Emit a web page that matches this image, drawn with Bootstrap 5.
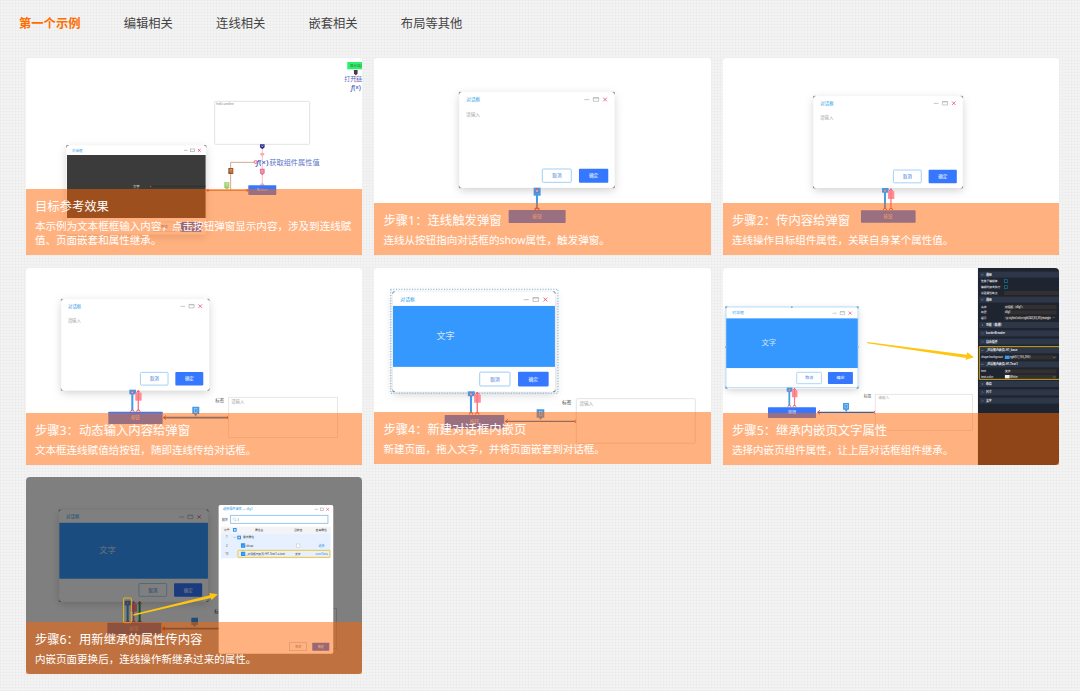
<!DOCTYPE html>
<html lang="zh-CN">
<head>
<meta charset="utf-8">
<meta name="viewport" content="width=device-width, initial-scale=1">
<title>第一个示例</title>
<link rel="stylesheet" href="https://cdn.jsdelivr.net/npm/bootstrap@5.3.0/dist/css/bootstrap.min.css">
<style>
  body {
    font-family: "Noto Sans", "Noto Sans CJK SC", sans-serif;
    background-color: #f3f3f3;
    background-image:
      linear-gradient(90deg, rgba(0,0,0,.014) 1px, transparent 1px),
      linear-gradient(rgba(0,0,0,.014) 1px, transparent 1px);
    background-size: 3px 3px;
    height: 691px;
    overflow: hidden;
  }
  .topic-nav { padding: 14px 0 0 19px; height: 58px; gap: 43.2px; }
  .topic-nav .nav-link { font-size: 12.3px; line-height: 20px; color: #444; padding: 0; }
  .topic-nav .nav-link.active { color: #ff6d00; font-weight: 700; }
  .steps { width: 1033.4px; margin-left: 25.7px; }
  .steps > .row { --bs-gutter-x: 12.3px; --bs-gutter-y: 12.6px; }
  .step { height: 197px; }
  .shot { width: 100%; height: 100%; border-radius: 4px; background: #fff; }
  .caption-bar { background: rgba(255,102,0,.5); color: #fff; padding: 8px 8px 7.6px 9.2px; }
  .caption-bar h2 { font-size: 12.35px; line-height: 20px; font-weight: 400; margin: 0 0 2px; }
  .caption-bar p { font-size: 10.56px; line-height: 14.4px; margin: 0; }
  svg text { font-family: "Noto Sans", "Noto Sans CJK SC", sans-serif; }
</style>
</head>
<body>
<svg width="0" height="0" class="position-absolute">
  <defs>
    <filter id="shade" x="-20%" y="-20%" width="140%" height="150%"><feDropShadow dx="0" dy="8" stdDeviation="13" flood-color="#000" flood-opacity=".18"/></filter>
    <g id="frame">
      <path d="M0 6V0H6M459 0H465V6M0 280V286H6M459 286H465V280" fill="none" stroke="#777" stroke-width="2.5"/>
      <rect width="465" height="286" rx="8" fill="#fff" filter="url(#shade)"/>
      <text x="21" y="26" font-size="14" fill="#2b9be8">对话框</text>
      <path d="M375 22H390" stroke="#bbb" stroke-width="2.5"/>
      <path d="M402 16H418V27H402ZM402 17.5H418" fill="none" stroke="#aaa" stroke-width="2"/>
      <path d="M432 16L443 27M443 16L432 27" stroke="#e8506e" stroke-width="2.5"/>
      <rect x="249" y="230" width="87" height="40" rx="3" fill="#fff" stroke="#8cc8f2" stroke-width="2.5"/>
      <text x="293" y="255" font-size="14" text-anchor="middle" fill="#3a78d8">取消</text>
      <rect x="359" y="229" width="88" height="42" rx="3" fill="#3578ff"/>
      <text x="403" y="255" font-size="14" text-anchor="middle" fill="#fff">确定</text>
    </g>
    <g id="dialog"><use href="#frame"/><text x="20" y="70" font-size="14" fill="#aaa">请输入</text></g>
    <g id="dialogBlue"><use href="#frame"/><rect y="40" width="465" height="175" fill="#3498ff"/>
      <text x="125" y="135" font-size="26" fill="#d6e4f2">文字</text></g>
    <g id="wires">
      <rect x="-9" y="0" width="20" height="14" fill="#439be8"/>
      <path d="M0 8V62" stroke="#439be8" stroke-width="6"/>
      <path d="M-5 11L0 3L5 11Z" fill="#c9dcf5" stroke="#d54b5b" stroke-width="2"/>
      <rect x="9" y="9" width="19" height="24" rx="2" fill="#ff8d96"/>
      <path d="M18 4V62M18 15V26" stroke="#ff7381" stroke-width="4"/>
      <path d="M13 9L18 2L23 9" fill="none" stroke="#ef4450" stroke-width="2.5"/>
      <path d="M-5 66A5 5 0 0 1 5 66M13 66A5 5 0 0 1 23 66" fill="none" stroke="#ff4a32" stroke-width="3"/>
    </g>
  </defs>
</svg>

<nav class="nav topic-nav">
  <a class="nav-link active" href="#">第一个示例</a>
  <a class="nav-link" href="#">编辑相关</a>
  <a class="nav-link" href="#">连线相关</a>
  <a class="nav-link" href="#">嵌套相关</a>
  <a class="nav-link" href="#">布局等其他</a>
</nav>

<main class="steps">
<div class="row row-cols-3 mt-0">

  <div class="col mt-0"><article class="step position-relative">
    <svg class="shot d-block" viewBox="17 24 1009 591" preserveAspectRatio="none">
      <rect x="981" y="36" width="50" height="22" fill="#2df06f"/><text x="989" y="51" font-size="11" fill="#4d6a31">显示结果</text>
      <path d="M1001 60H1012V71L1007 76L1001 71Z" fill="#4b3654"/>
      <text x="972" y="94" font-size="18" fill="#5067bb">打开链接</text>
      <path d="M1007 76V92" stroke="#f3a5af" stroke-width="2"/>
      <path d="M1002 92H1012L1007 98Z" fill="#f3a5af"/>
      <text x="992" y="119" font-size="19" font-weight="600" fill="#4964c2" textLength="30" lengthAdjust="spacingAndGlyphs"><tspan font-style="italic">f</tspan>(×)</text>
      <rect x="583" y="154" width="285" height="129" rx="3" fill="#fff" stroke="#ddd" stroke-width="2.5"/>
      <text x="588" y="166" font-size="10" fill="#777" textLength="52" lengthAdjust="spacingAndGlyphs">hello uniline</text>
      <path d="M139 293V287H145M551 287H557V293" fill="none" stroke="#777" stroke-width="2.5"/>
      <g filter="url(#shade)"><rect x="139" y="287" width="418" height="266" rx="6" fill="#fff"/></g>
      <text x="155" y="305" font-size="10.5" fill="#2b9be8">对话框</text>
      <path d="M491 301H502" stroke="#aaa" stroke-width="2"/><rect x="511" y="297" width="12" height="8" fill="none" stroke="#aaa" stroke-width="2"/>
      <path d="M533 297L541 305M541 297L533 305" stroke="#e8506e" stroke-width="2.5"/>
      <rect x="140" y="315" width="416" height="189" fill="#3b3b3b"/>
      <text x="338" y="413" font-size="10" fill="#eee">文字</text>
      <path d="M392 409H556" stroke="#2a2a2e" stroke-width="2"/><circle cx="391" cy="409" r="2" fill="#ff4d5c"/>
      <rect x="400" y="516" width="64" height="29" fill="#fff" stroke="#c6dfee" stroke-width="2"/><text x="432" y="534" font-size="10" text-anchor="middle" fill="#3a78d8">取消</text>
      <rect x="480" y="516" width="64" height="29" rx="2" fill="#3568e8"/><text x="512" y="534" font-size="10" text-anchor="middle" fill="#fff">确定</text>
      <path d="M719 283H733V292L726 298L719 292Z" fill="#2d2f8d"/><path d="M723 286L726 291L729 286" fill="none" stroke="#ddb4d4" stroke-width="2"/>
      <path d="M726 298V406" stroke="#f6b3bd" stroke-width="2.5"/>
      <path d="M721 311A5 5 0 0 0 731 311ZM721 406A5 5 0 0 1 731 406Z" fill="#ffc9cd" stroke="#f58590" stroke-width="2"/>
      <path d="M702 337H631V421" fill="none" stroke="#c99a79" stroke-width="2.5"/>
      <path d="M557 421H684" stroke="#c9683a" stroke-width="2.5"/>
      <rect x="624" y="354" width="15" height="18" fill="#9d5422"/><text x="627" y="367" font-size="10" fill="#ebc8ac">值</text>
      <path d="M612 397H627V413L620 418L612 413Z" fill="#99cb61"/><text x="615" y="409" font-size="10" fill="#e6f2d0">值</text>
      <path d="M719 356H733V370L726 376L719 370Z" fill="#e36b8c"/><text x="721" y="368" font-size="10" fill="#f9c9d5">值</text>
      <circle cx="706" cy="336" r="4.5" fill="#ffd6d6" stroke="#f26565" stroke-width="2.5"/>
      <text x="708" y="345" font-size="23" font-weight="600" fill="#4964c2" textLength="37" lengthAdjust="spacingAndGlyphs"><tspan font-style="italic">f</tspan>(×)</text>
      <text x="747" y="345" font-size="21.6" fill="#6278c8">获取组件属性值</text>
      <rect x="684" y="406" width="84" height="29" rx="2" fill="#3578ff"/><text x="726" y="424" font-size="10" text-anchor="middle" fill="#d8cfdc">Button</text>
      <circle cx="563" cy="421" r="3.5" fill="#f7482a"/><circle cx="681" cy="421" r="3" fill="none" stroke="#f7482a" stroke-width="2.5"/>
    </svg>
    <div class="caption-bar position-absolute bottom-0 start-0 w-100"><h2>目标参考效果</h2><p>本示例为文本框框输入内容，点击按钮弹窗显示内容，涉及到连线赋值、页面嵌套和属性继承。</p></div>
  </article></div>

  <div class="col mt-0"><article class="step position-relative">
    <svg class="shot d-block" viewBox="13 24 1009 591" preserveAspectRatio="none">
      <use href="#dialog" transform="translate(269 127)"/>
      <rect x="492" y="413" width="21" height="24" fill="#439be8"/><path d="M502 430V478" stroke="#439be8" stroke-width="6"/>
      <path d="M496 426L502 416L508 426Z" fill="#c9dcf5" stroke="#d54b5b" stroke-width="2.5"/>
      <path d="M496 480A6 6 0 0 1 508 480" fill="none" stroke="#ff3b22" stroke-width="4"/>
      <rect x="417" y="480" width="171" height="39" rx="2" fill="#3578ff"/>
      <text x="502" y="504" font-size="14" text-anchor="middle" fill="#e8dcd8">按钮</text>
    </svg>
    <div class="caption-bar position-absolute bottom-0 start-0 w-100"><h2>步骤1：连线触发弹窗</h2><p>连线从按钮指向对话框的show属性，触发弹窗。</p></div>
  </article></div>

  <div class="col mt-0"><article class="step position-relative">
    <svg class="shot d-block" viewBox="15 24 1009 591" preserveAspectRatio="none">
      <use href="#dialog" transform="translate(287 139) scale(.961)"/>
      <use href="#wires" transform="translate(501 414)"/>
      <rect x="429" y="481" width="164" height="37" rx="2" fill="#3578ff"/><text x="510" y="503" font-size="13" text-anchor="middle" fill="#e8dcd8">按钮</text>
    </svg>
    <div class="caption-bar position-absolute bottom-0 start-0 w-100"><h2>步骤2：传内容给弹窗</h2><p>连线操作目标组件属性，关联自身某个属性值。</p></div>
  </article></div>

  <div class="col"><article class="step position-relative">
    <svg class="shot d-block" viewBox="17 24 1009 591" preserveAspectRatio="none">
      <use href="#dialog" transform="translate(123 118) scale(.953)"/>
      <use href="#wires" transform="translate(336 389)"/>
      <rect x="264" y="455" width="163" height="37" rx="2" fill="#3578ff"/><text x="345" y="477" font-size="13" text-anchor="middle" fill="#e8dcd8">按钮</text>
      <path d="M430 473H624" stroke="#2f70b8" stroke-width="5"/>
      <path d="M437 467L429 473L437 479M625 467L619 473L625 479" fill="none" stroke="#ff3b22" stroke-width="3"/>
      <path d="M516 440H537V462H531L526 470L521 462H516Z" fill="#439be8"/><rect x="523" y="446" width="7" height="11" fill="none" stroke="#b7dcfa" stroke-width="1.5"/>
      <text x="585" y="426" font-size="13.5" fill="#555">标签</text>
      <rect x="625" y="412" width="327" height="121" fill="none" stroke="#e2e2e2" stroke-width="2.5"/><text x="633" y="429" font-size="13" fill="#aaa">请输入</text>
    </svg>
    <div class="caption-bar position-absolute bottom-0 start-0 w-100"><h2>步骤3：动态输入内容给弹窗</h2><p>文本框连线赋值给按钮，随即连线传给对话框。</p></div>
  </article></div>

  <div class="col"><article class="step position-relative" style="height:196.3px">
    <svg class="shot d-block" viewBox="13 24 1009 589" preserveAspectRatio="none">
      <use href="#dialogBlue" transform="translate(70 96) scale(1.045)"/>
      <rect x="63" y="88" width="502" height="312" fill="none" stroke="#8fbfe3" stroke-width="4" stroke-dasharray="3 5"/>
      <use href="#wires" transform="translate(304 394) scale(1.05)"/>
      <rect x="225" y="465" width="179" height="41" rx="2" fill="#3578ff"/><text x="314" y="490" font-size="14" text-anchor="middle" fill="#e8dcd8">按钮</text>
      <path d="M408 484H618" stroke="#2f70b8" stroke-width="4"/>
      <path d="M415 478L407 484L415 490M620 478L614 484L620 490" fill="none" stroke="#ff3b22" stroke-width="3"/>
      <path d="M501 448H524V473H518L513 480L508 473H501Z" fill="#439be8"/><rect x="509" y="455" width="8" height="12" fill="none" stroke="#b7dcfa" stroke-width="1.5"/>
      <text x="577" y="431" font-size="14.5" fill="#444">标签</text>
      <rect x="620" y="416" width="357" height="134" rx="3" fill="none" stroke="#ddd" stroke-width="2.5"/><text x="629" y="434" font-size="14" fill="#aaa">请输入</text>
    </svg>
    <div class="caption-bar position-absolute bottom-0 start-0 w-100"><h2>步骤4：新建对话框内嵌页</h2><p>新建页面，拖入文字，并将页面嵌套到对话框。</p></div>
  </article></div>

  <div class="col"><article class="step position-relative">
    <svg class="shot d-block" viewBox="15 24 1009 591" preserveAspectRatio="none">
      <use href="#dialogBlue" transform="translate(24 141) scale(.852)"/>
      <rect x="24" y="141" width="396" height="242" fill="none" stroke="#9cd0f5" stroke-width="2"/>
      <g fill="#7ab4da"><rect x="21" y="139" width="5" height="5"/><rect x="219" y="139" width="5" height="5"/><rect x="417" y="139" width="5" height="5"/><rect x="21" y="259" width="5" height="5"/><rect x="417" y="259" width="5" height="5"/><rect x="21" y="380" width="5" height="5"/><rect x="417" y="380" width="5" height="5"/></g>
      <use href="#wires" transform="translate(214 383) scale(.87)"/>
      <rect x="150" y="442" width="144" height="32" rx="2" fill="#3578ff"/><text x="222" y="462" font-size="12" text-anchor="middle" fill="#eee">按钮</text>
      <path d="M299 457H470" stroke="#41608c" stroke-width="4"/>
      <path d="M306 451L299 457L306 463M472 452L467 457L472 462" fill="none" stroke="#ff3b42" stroke-width="3"/>
      <path d="M375 429H393V449H389L385 456L380 449H375Z" fill="#439be8"/><rect x="381" y="434" width="7" height="10" fill="none" stroke="#b7dcfa" stroke-width="1.5"/>
      <text x="437" y="415" font-size="12" fill="#555">标签</text>
      <rect x="472" y="403" width="292" height="108" fill="none" stroke="#e2e2e2" stroke-width="2.5"/><text x="480" y="418" font-size="11.5" fill="#aaa">请输入</text>
      <path d="M448 246L746 284L748 277L768 292L742 300L745 294L448 250Z" fill="#ffc510"/>
      <rect x="780" y="24" width="244" height="591" fill="#1e2430"/>
      <g fill="#2d3748"><rect x="784" y="35" width="240" height="18"/><rect x="784" y="110" width="240" height="18"/><rect x="784" y="186" width="240" height="18"/><rect x="784" y="211" width="240" height="18"/><rect x="784" y="236" width="240" height="18"/><rect x="784" y="262" width="240" height="18"/><rect x="784" y="304" width="240" height="18"/><rect x="784" y="363" width="240" height="18"/><rect x="784" y="388" width="240" height="18"/><rect x="784" y="413" width="240" height="18"/></g>
      <g fill="#33302f"><rect x="859" y="93" width="165" height="12"/><rect x="859" y="135" width="157" height="12"/><rect x="859" y="151" width="157" height="12"/><rect x="859" y="168" width="140" height="12"/><rect x="859" y="286" width="157" height="12"/><rect x="859" y="328" width="157" height="12"/><rect x="859" y="344" width="157" height="12"/></g>
      <g fill="none" stroke="#167894" stroke-width="2"><rect x="860" y="59" width="9" height="9"/><rect x="860" y="77" width="9" height="9"/></g>
      <g fill="none" stroke="#9aa5b5" stroke-width="1.5"><path d="M790 42L793 46L797 42M790 117L793 121L797 117M790 269L793 273L797 269M790 311L793 315L797 311M792 192L795 195L792 198M792 217L795 220L792 223M792 242L795 245L792 248M792 369L795 372L792 375M792 394L795 397L792 400M792 419L795 422L792 425M1005 290L1009 294L1013 290M1005 349L1009 353L1013 349"/></g>
      <g font-size="8.8" fill="#eef1f6" font-weight="600">
        <text x="804" y="47">通用</text><text x="804" y="122">通用</text><text x="804" y="198">功能（数据）</text><text x="804" y="223" textLength="58" lengthAdjust="spacingAndGlyphs">borderBreader</text><text x="804" y="248">自由插件</text><text x="804" y="274">_对话框内嵌页-H1_base</text><text x="804" y="316">_对话框内嵌页-H1-Text1</text><text x="804" y="374">布局</text><text x="804" y="400">尺寸</text><text x="804" y="425">文字</text></g>
      <g font-size="8.3" fill="#e3e6eb" font-weight="500">
        <text x="789" y="67">聚焦于编辑库</text><text x="789" y="84">编辑时双击执行</text><text x="789" y="101">设置属性断点</text><text x="789" y="143">名称</text><text x="861" y="143">对话框（dlg1）</text><text x="789" y="160">标题</text><text x="861" y="160">dlg1</text><text x="789" y="177">提示</text><text x="861" y="177" textLength="138" lengthAdjust="spacingAndGlyphs">&lt;p style='color:rgb(242,63,35);margin</text><text x="1004" y="177">···</text>
        <text x="789" y="294" textLength="66" lengthAdjust="spacingAndGlyphs">shape.backgroun</text><text x="876" y="294" textLength="61" lengthAdjust="spacingAndGlyphs">rgb(51,153,255)</text><text x="789" y="336">text</text><text x="861" y="336">文字</text><text x="789" y="353">text.color</text><text x="876" y="353">White</text></g>
      <rect x="861" y="287" width="14" height="10" fill="#3498ff"/><rect x="861" y="345" width="14" height="10" fill="#eee"/>
      <path d="M1024 260H784V358H1024" fill="none" stroke="#d5aa19" stroke-width="3"/>
    </svg>
    <div class="caption-bar position-absolute bottom-0 start-0 w-100"><h2>步骤5：继承内嵌页文字属性</h2><p>选择内嵌页组件属性，让上层对话框组件继承。</p></div>
  </article></div>

  <div class="col"><article class="step position-relative">
    <svg class="shot d-block" viewBox="17 22 1009 591" preserveAspectRatio="none">
      <use href="#dialogBlue" transform="translate(117 121) scale(.959)"/>
      <use href="#wires" transform="translate(322 393)"/>
      <path d="M358 398V457" stroke="#27a34b" stroke-width="6"/><path d="M353 403L358 395L363 403M353 458A5 5 0 0 1 363 458" fill="none" stroke="#ef4450" stroke-width="3"/>
      <rect x="261" y="459" width="162" height="36" rx="2" fill="#3578ff"/><text x="340" y="482" font-size="13" text-anchor="middle" fill="#e8dcd8">按钮</text>
      <path d="M426 477H620" stroke="#2f70b8" stroke-width="5"/><path d="M434 471L426 477L434 483" fill="#ff3b22" stroke="#ff3b22" stroke-width="3"/>
      <path d="M513 444H533V466H528L523 473L518 466H513Z" fill="#439be8"/>
      <text x="582" y="429" font-size="13.5" fill="#333">标签</text><rect x="622" y="416" width="327" height="121" fill="none" stroke="#ccc" stroke-width="2.5"/>
      <rect x="17" y="22" width="1010" height="592" fill="#000" fill-opacity=".5"/>
      <rect x="310" y="385" width="23" height="74" rx="2" fill="none" stroke="#e9b818" stroke-width="3"/>
      <path d="M339 434L569 377L567 370L593 374L574 391L571 385L339 438Z" fill="#ffc510"/>
      <rect x="595" y="106" width="344" height="446" rx="5" fill="#fff"/>
      <text x="608" y="122" font-size="9.4" fill="#2b9be8">选择插件属性 — dlg1</text>
      <path d="M883 119H893" stroke="#aaa" stroke-width="1.8"/><rect x="900" y="115" width="10" height="8" fill="none" stroke="#aaa" stroke-width="1.8"/><path d="M918 115L926 123M926 115L918 123" stroke="#e8506e" stroke-width="2"/>
      <text x="605" y="153" font-size="8.6" fill="#333">模块</text><rect x="631" y="137" width="292" height="24" fill="#fff" stroke="#82bee9" stroke-width="2.5"/>
      <circle cx="642" cy="148" r="4" fill="none" stroke="#bbb" stroke-width="1.3"/><path d="M645 151L648 154M654 145V154" stroke="#888" stroke-width="1.5"/>
      <rect x="602" y="171" width="329" height="20" fill="#f4f4f6"/><rect x="602" y="191" width="329" height="75" fill="#e6f0ff"/>
      <g fill="#333" font-size="8.4"><text x="611" y="183">序号</text><text x="704" y="183">属性名</text><text x="821" y="183">当前值</text><text x="886" y="183">自由属性</text><text x="617" y="206">1</text><text x="668" y="206">最新属性</text><text x="617" y="231">2</text><text x="678" y="231">show</text><text x="615" y="255">13</text><text x="678" y="255" textLength="116" lengthAdjust="spacingAndGlyphs">_对话框内嵌页&gt;H1-Text1-a.text</text><text x="824" y="255">文字</text></g>
      <text x="895" y="231" font-size="8.6" fill="#2b8ee0">选择</text><text x="886" y="255" font-size="8.6" fill="#2b8ee0">userData</text>
      <g fill="#2b8eee"><rect x="638" y="175" width="11" height="11"/><rect x="651" y="198" width="11" height="11"/><rect x="662" y="221" width="13" height="13" rx="1"/><rect x="662" y="246" width="13" height="13" rx="1"/></g>
      <path d="M641 178H646V183H641ZM654 201H659V206H654Z" fill="#d6e8fc"/><path d="M665 227L668 230L673 224M665 252L668 255L673 249" fill="none" stroke="#b7d9ff" stroke-width="1.5"/><path d="M640 201L643 205L647 201" fill="none" stroke="#999" stroke-width="1.5"/>
      <rect x="828" y="223" width="11" height="11" fill="#fff" stroke="#bbb" stroke-width="1.3"/>
      <rect x="653" y="242" width="276" height="21" rx="2" fill="none" stroke="#f2c52f" stroke-width="3"/>
      <rect x="808" y="519" width="51" height="24" fill="#fff" stroke="#a8c6e6" stroke-width="2"/><text x="834" y="534" font-size="9" text-anchor="middle" fill="#6877ae">取消</text>
      <rect x="876" y="519" width="51" height="24" rx="2" fill="#3568e8"/><text x="902" y="534" font-size="9" text-anchor="middle" fill="#fff">确定</text>
    </svg>
    <div class="caption-bar position-absolute bottom-0 start-0 w-100"><h2>步骤6：用新继承的属性传内容</h2><p>内嵌页面更换后，连线操作新继承过来的属性。</p></div>
  </article></div>

</div>
</main>
<script src="https://cdn.jsdelivr.net/npm/bootstrap@5.3.0/dist/js/bootstrap.bundle.min.js"></script>
</body>
</html>
